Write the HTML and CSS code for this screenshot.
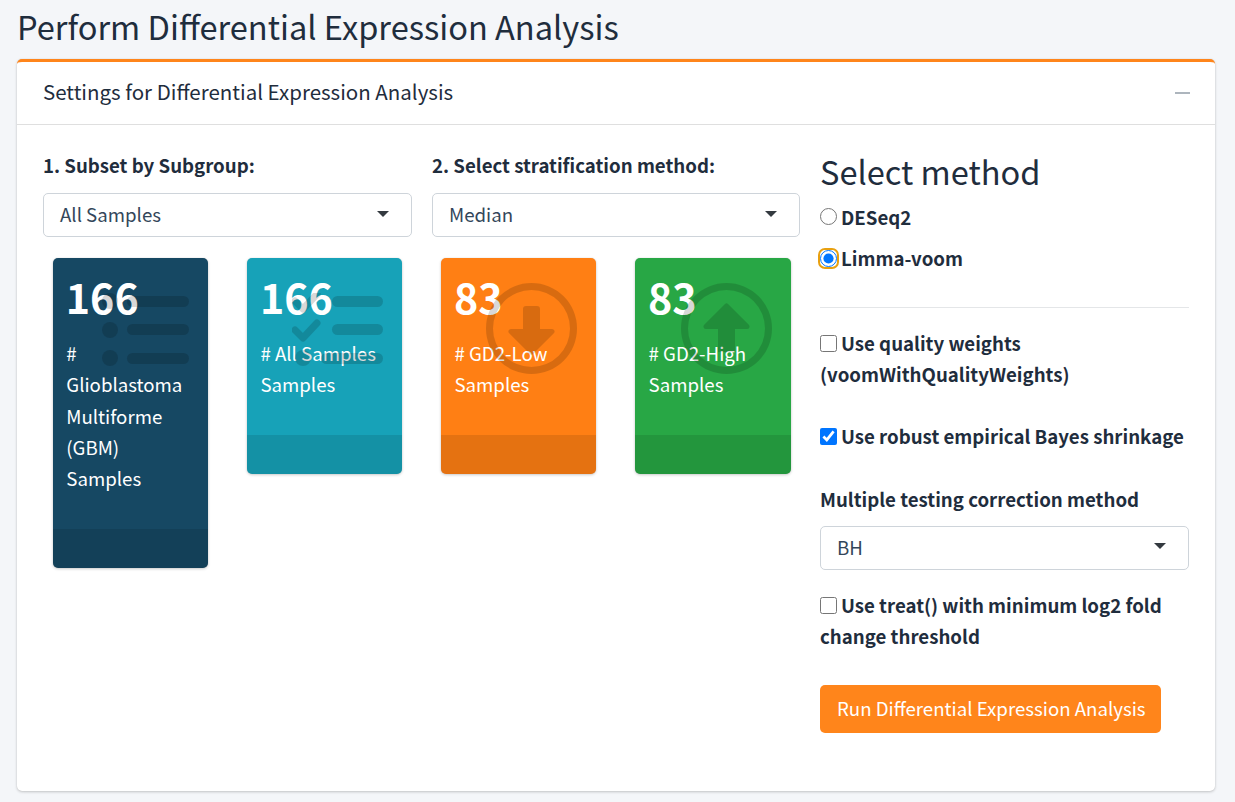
FILE: index.html
```html
<!DOCTYPE html>
<html lang="en">
<head>
<meta charset="utf-8">
<title>Perform Differential Expression Analysis</title>
<link rel="stylesheet" href="styles.css">
</head>
<body>
<main class="page">
  <h1 class="page-title">Perform Differential Expression Analysis</h1>
  <section class="card">
    <header class="card-header">
      <h2 class="card-title">Settings for Differential Expression Analysis</h2>
      <span class="collapse-icon"></span>
    </header>
    <div class="card-body">
      <div class="left-col">
        <div class="filters">
          <div class="filter">
            <div class="field-label">1. Subset by Subgroup:</div>
            <div class="select"><span>All Samples</span><i class="caret"></i></div>
          </div>
          <div class="filter">
            <div class="field-label">2. Select stratification method:</div>
            <div class="select"><span>Median</span><i class="caret"></i></div>
          </div>
        </div>
        <div class="boxes">
          <div class="small-box navy">
            <div class="inner">
              <h3>166</h3>
              <p># Glioblastoma Multiforme (GBM) Samples</p>
            </div>
            <svg class="icon icon-list" viewBox="0 0 88 73" aria-hidden="true">
              <circle cx="9" cy="8" r="8"/><circle cx="9" cy="37" r="8"/><circle cx="9" cy="65" r="8"/>
              <rect x="26" y="3" width="62" height="11" rx="5.5"/><rect x="26" y="31" width="62" height="11" rx="5.5"/><rect x="26" y="60" width="62" height="11" rx="5.5"/>
            </svg>
            <div class="box-footer"></div>
          </div>
          <div class="small-box teal">
            <div class="inner">
              <h3>166</h3>
              <p># All Samples Samples</p>
            </div>
            <svg class="icon icon-list" viewBox="0 0 91 73" aria-hidden="true">
              <path class="check" d="M3 8l8 8 14-15"/><path class="check" d="M3 37l8 8 14-15"/>
              <circle cx="11" cy="65" r="8"/>
              <rect x="40" y="3" width="51" height="11" rx="5.5"/><rect x="40" y="31" width="51" height="11" rx="5.5"/><rect x="29" y="60" width="62" height="11" rx="5.5"/>
            </svg>
            <div class="box-footer"></div>
          </div>
          <div class="small-box orange">
            <div class="inner">
              <h3>83</h3>
              <p># GD2-Low Samples</p>
            </div>
            <svg class="icon icon-arrow" viewBox="0 0 91 91" aria-hidden="true">
              <path fill-rule="evenodd" d="M45.500 0a45.500 45.500 0 1 0 0 91a45.500 45.500 0 1 0 0-91zM45.500 7a38.500 38.500 0 1 1 0 77a38.500 38.500 0 1 1 0-77z"/>
              <path d="M40 23h11a3 3 0 0 1 3 3v20h12a2.500 2.500 0 0 1 1.800 4.300L47 71a2 2 0 0 1-3 0L23.200 50.300A2.500 2.500 0 0 1 25 46h12V26a3 3 0 0 1 3-3z"/>
            </svg>
            <div class="box-footer"></div>
          </div>
          <div class="small-box green">
            <div class="inner">
              <h3>83</h3>
              <p># GD2-High Samples</p>
            </div>
            <svg class="icon icon-arrow" viewBox="0 0 91 91" aria-hidden="true">
              <path fill-rule="evenodd" d="M45.500 0a45.500 45.500 0 1 0 0 91a45.500 45.500 0 1 0 0-91zM45.500 7a38.500 38.500 0 1 1 0 77a38.500 38.500 0 1 1 0-77z"/>
              <path d="M44 21a2 2 0 0 1 3 0L67.800 41.700A2.500 2.500 0 0 1 66 46H54v23H37V46H25a2.500 2.500 0 0 1-1.800-4.300z"/>
            </svg>
            <div class="box-footer"></div>
          </div>
        </div>
      </div>
      <form class="right-col">
        <h4 class="method-title">Select method</h4>
        <label class="opt radio-first"><input type="radio" name="method"><span>DESeq2</span></label>
        <label class="opt radio-second"><span class="focus-ring"><input type="radio" name="method" checked></span><span>Limma-voom</span></label>
        <hr class="divider">
        <label class="opt"><input type="checkbox"><span>Use quality weights (voomWithQualityWeights)</span></label>
        <label class="opt opt-robust"><input type="checkbox" checked><span>Use robust empirical Bayes shrinkage</span></label>
        <div class="field-label correction-label">Multiple testing correction method</div>
        <div class="select"><span>BH</span><i class="caret"></i></div>
        <label class="opt opt-treat"><input type="checkbox"><span>Use treat() with minimum log2 fold change threshold</span></label>
        <button class="run-btn" type="button">Run Differential Expression Analysis</button>
      </form>
    </div>
  </section>
</main>
</body>
</html>
```
FILE: styles.css
```css
* { box-sizing: border-box; }
html, body { margin: 0; height: 100%; overflow: hidden; }
body {
  background: #f4f6f9;
  color: #1f2d3d;
  font-family: "Noto Sans CJK SC", "Source Sans Pro", "Noto Sans", sans-serif;
  font-size: 18.66px;
  line-height: 31.2px;
}
.page { padding: 0 20px 0 17px; }
.page-title {
  margin: 0;
  height: 59px;
  padding-top: 4px;
  font-size: 32.6px;
  line-height: 44px;
  font-weight: 400;
}
.card {
  height: 732px;
  background: #fff;
  border-top: 3px solid #ff851b;
  border-radius: 5px;
  box-shadow: 0 0 1px rgba(0,0,0,.125), 0 1px 3px rgba(0,0,0,.2);
}
.card-header {
  display: flex;
  align-items: center;
  justify-content: space-between;
  height: 63px;
  padding: 0 25px 0 26px;
  border-bottom: 1px solid #dfdfdf;
}
.card-title { margin: 0 0 4px; font-size: 20.5px; line-height: 58px; font-weight: 400; }
.collapse-icon { width: 15px; height: 2.500px; background: #adb5bd; }
.card-body {
  display: grid;
  grid-template-columns: 757px 369px;
  column-gap: 20px;
  padding: 24px 26px 0;
}
.filters { display: grid; grid-template-columns: 369px 368px; column-gap: 20px; }
.field-label { font-weight: 700; margin-bottom: 13px; }
.select {
  display: flex;
  align-items: center;
  justify-content: space-between;
  height: 44px;
  padding: 0 22px 3px 16px;
  background: #fff;
  border: 1px solid #ced4da;
  border-radius: 5px;
  color: #33465a;
}
.caret {
  width: 0;
  height: 0;
  border-style: solid;
  border-width: 6px 6px 0;
  border-color: #343a40 transparent transparent;
}
.boxes {
  display: grid;
  grid-template-columns: repeat(3, 155.2px) 155.7px;
  column-gap: 38.9px;
  align-items: start;
  margin-top: 21px;
  padding: 0 0 0 10px;
}
.small-box {
  position: relative;
  color: #fff;
  border-radius: 5px;
  overflow: hidden;
  box-shadow: 0 0 1px rgba(0,0,0,.125), 0 1px 3px rgba(0,0,0,.2);
}
.navy { background: #164863; }
.teal { background: #17a2b8; }
.orange { background: #ff7f14; }
.green { background: #28a745; }
.inner { padding: 12px 13.3px 14.6px; }
.inner h3 { margin: -1px 0 13px -0.5px; font-size: 41.200px; line-height: 55px; font-weight: 700; }
.inner p { margin: 0 0 21px; line-height: 31.25px; }
.box-footer { height: 39px; background: rgba(0,0,0,.1); }
.icon { position: absolute; fill: #000; opacity: .15; }
.icon-list { top: 35px; right: 19px; width: 88px; height: 73px; }
.teal .icon-list { width: 91px; }
.icon-arrow { top: 25px; right: 19px; width: 91px; height: 91px; }
.check { fill: none; stroke: #000; stroke-width: 7px; stroke-linecap: round; stroke-linejoin: round; }
.method-title { margin: 0 0 1px; font-size: 32.6px; line-height: 43px; font-weight: 400; }
.opt { display: block; font-weight: 700; line-height: 31px; }
.opt input {
  width: 17px;
  height: 17px;
  margin: 0 4px 0 0;
  vertical-align: -1px;
}
.radio-first input { vertical-align: 0; }
.focus-ring {
  display: inline-flex;
  width: 21px;
  height: 21px;
  margin: 0 2px 0 -2px;
  vertical-align: -1px;
  border: 2px solid #e8a010;
  border-radius: 7px;
}
.opt .focus-ring input { margin: 0; }
.radio-first { margin-top: 9px; }
.radio-second { margin-top: 10px; }
.divider { margin: 34.400px 0 19px; border: 0; border-top: 1px solid #e4e6e8; }
.opt-robust { margin-top: 31px; }
.correction-label { margin: 32px 0 11.400px; }
.opt-treat { margin-top: 19.500px; }
.run-btn {
  display: block;
  margin-top: 33.500px;
  height: 48px;
  padding: 0 15px 2px 17px;
  border: 0;
  border-radius: 5px;
  background: #ff851b;
  color: #fff;
  font: inherit;
}
```
